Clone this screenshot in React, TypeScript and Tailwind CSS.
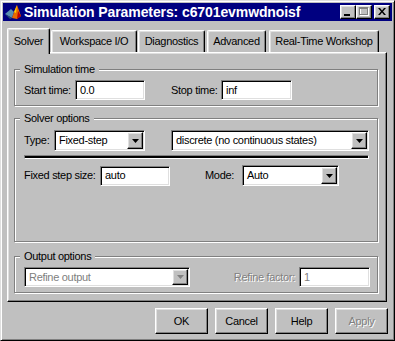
import React from "react";

const raised =
  "border border-t-white border-l-white border-r-black border-b-black shadow-[inset_-1px_-1px_0_#808080,inset_1px_1px_0_#dfdfdf]";
const sunken =
  "border border-t-[#808080] border-l-[#808080] border-r-white border-b-white shadow-[inset_1px_1px_0_#000,inset_-1px_-1px_0_#dfdfdf]";

function Field({ w, text, disabled }: { w: string; text: string; disabled?: boolean }) {
  return (
    <div
      className={`${sunken} ${w} h-[20px] bg-white flex items-center pl-[4px] ${
        disabled ? "text-[#808080]" : "text-black"
      }`}
    >
      {text}
    </div>
  );
}

function Select({ w, text, disabled, h = "h-[21px]" }: { w: string; text: string; disabled?: boolean; h?: string }) {
  return (
    <div className={`${sunken} ${w} ${h} bg-white flex items-stretch p-[1px]`}>
      <div className={`flex-1 flex items-center pl-[3px] ${disabled ? "text-[#808080]" : "text-black"}`}>{text}</div>
      <div className={`${raised} w-[16px] bg-[#c0c0c0] flex items-center justify-center`}>
        <svg width="7" height="4" viewBox="0 0 7 4">
          <polygon points="0,0 7,0 3.5,4" fill={disabled ? "#808080" : "#000"} />
        </svg>
      </div>
    </div>
  );
}

function Group({ title, className, children }: { title: string; className: string; children?: React.ReactNode }) {
  return (
    <div className={`relative border border-[#808080] shadow-[1px_1px_0_#fff,inset_1px_1px_0_#fff] ${className}`}>
      <span className="absolute left-[5px] top-[-7px] bg-[#c0c0c0] px-[4px] leading-[13px]">{title}</span>
      {children}
    </div>
  );
}

function Tab({ label, w, ml, selected }: { label: string; w: string; ml: string; selected?: boolean }) {
  return (
    <div
      className={`${w} ${ml} ${
        selected ? "h-[26px] mb-[-2px] z-10 pt-[6px]" : "h-[22px] pt-[4px]"
      } relative bg-[#c0c0c0] border-t border-l border-r border-t-white border-l-white border-r-black rounded-t-[2px] shadow-[inset_-1px_0_0_#808080,inset_1px_1px_0_#dfdfdf] flex justify-center leading-[13px]`}
    >
      {label}
    </div>
  );
}

function Button({ label, disabled }: { label: string; disabled?: boolean }) {
  return (
    <div
      className={`${raised} w-[53px] h-[26px] flex items-center justify-center ${
        disabled ? "text-[#808080] [text-shadow:1px_1px_0_#fff]" : "text-black"
      }`}
    >
      {label}
    </div>
  );
}

export default function App() {
  return (
    <div className="w-[395px] h-[341px] bg-[#c0c0c0] border border-t-[#dfdfdf] border-l-[#dfdfdf] border-r-black border-b-black shadow-[inset_1px_1px_0_#fff,inset_-1px_-1px_0_#808080] p-[2px] flex flex-col font-['Liberation_Sans',Arial,sans-serif] text-[11px] tracking-[-0.3px] text-black overflow-hidden">
      {/* Title bar */}
      <div className="h-[18px] bg-[#000080] flex items-center pl-[2px] pr-[2px] shrink-0">
        <svg width="16" height="16" viewBox="0 0 16 16">
          <polygon points="0,10 6,5 9,8 7,14" fill="#5a8fb0" />
          <polygon points="0,10 7,14 5,15" fill="#2a5070" />
          <polygon points="7,14 9,8 12,1 16,12 12,15" fill="#e86a00" />
          <polygon points="9,8 12,1 11,9" fill="#ffd400" />
          <polygon points="12,15 16,12 13,7" fill="#c00000" />
        </svg>
        <span className="ml-[3px] text-white font-bold text-[14px] tracking-[-0.1px] leading-none">
          Simulation Parameters: c6701evmwdnoisf
        </span>
        <div className="ml-auto flex items-center">
          <div className={`${raised} w-[16px] h-[14px] bg-[#c0c0c0] relative`}>
            <svg className="absolute left-[3px] top-[8px]" width="6" height="2" viewBox="0 0 6 2">
              <rect width="6" height="2" fill="#000" />
            </svg>
          </div>
          <div className={`${raised} w-[16px] h-[14px] bg-[#c0c0c0] relative`}>
            <svg className="absolute left-[2px] top-[1px]" width="11" height="10" viewBox="0 0 11 10">
              <rect x="1.5" y="1.5" width="8" height="7" fill="none" stroke="#fff" />
              <rect x="0.5" y="0.5" width="8" height="7" fill="none" stroke="#808080" />
              <rect x="0" y="1" width="9" height="1" fill="#808080" />
            </svg>
          </div>
          <div className={`${raised} w-[16px] h-[14px] bg-[#c0c0c0] relative ml-[2px]`}>
            <svg className="absolute left-[3px] top-[2px]" width="8" height="7" viewBox="0 0 8 7">
              <path d="M0,0 L2,0 L4,2.5 L6,0 L8,0 L5,3.5 L8,7 L6,7 L4,4.5 L2,7 L0,7 L3,3.5 Z" fill="#000" />
            </svg>
          </div>
        </div>
      </div>

      {/* Tabs */}
      <div className="mt-[7px] h-[24px] pl-[4px] flex items-end shrink-0">
        <Tab label="Solver" w="w-[43px]" ml="ml-0" selected />
        <Tab label="Workspace I/O" w="w-[86px]" ml="ml-[1px]" />
        <Tab label="Diagnostics" w="w-[67px]" ml="ml-[1px]" />
        <Tab label="Advanced" w="w-[59px]" ml="ml-[2px]" />
        <Tab label="Real-Time Workshop" w="w-[110px]" ml="ml-[3px]" />
      </div>

      {/* Panel */}
      <div className={`${raised} ml-[4px] w-[380px] h-[250px] shrink-0 flex flex-col pl-[6px] pt-[16px]`}>
        <Group title="Simulation time" className="w-[364px] h-[37px] pt-[10px] pl-[9px]">
          <div className="flex items-center">
            <span className="w-[51px]">Start time:</span>
            <Field w="w-[70px]" text="0.0" />
            <span className="ml-[26px] w-[50px]">Stop time:</span>
            <Field w="w-[71px]" text="inf" />
          </div>
        </Group>

        <Group title="Solver options" className="mt-[12px] w-[364px] h-[124px] pt-[11px] pl-[9px]">
          <div className="flex items-center">
            <span className="w-[30px]">Type:</span>
            <Select w="w-[91px]" text="Fixed-step" />
            <div className="ml-[26px]">
              <Select w="w-[198px]" text="discrete (no continuous states)" />
            </div>
          </div>
          <div className="mt-[4px] w-[345px] h-[4px] border-t border-l border-t-[#808080] border-l-[#808080] border-b border-r border-b-white border-r-white bg-black" />
          <div className="mt-[6px] flex items-center">
            <span className="w-[76px]">Fixed step size:</span>
            <Field w="w-[70px]" text="auto" />
            <span className="ml-[35px] w-[37px]">Mode:</span>
            <Select w="w-[97px]" text="Auto" />
          </div>
        </Group>

        <Group title="Output options" className="mt-[14px] w-[364px] h-[37px] pt-[10px] pl-[9px]">
          <div className="flex items-center">
            <Select w="w-[166px]" h="h-[20px]" text="Refine output" disabled />
            <span className="w-[109px] pr-[4px] text-right text-[#808080] [text-shadow:1px_1px_0_#fff]">
              Refine factor:
            </span>
            <Field w="w-[71px]" text="1" disabled />
          </div>
        </Group>
      </div>

      {/* Buttons */}
      <div className="mt-[6px] flex justify-end gap-[7px] pr-[4px] shrink-0">
        <Button label="OK" />
        <Button label="Cancel" />
        <Button label="Help" />
        <Button label="Apply" disabled />
      </div>
    </div>
  );
}
